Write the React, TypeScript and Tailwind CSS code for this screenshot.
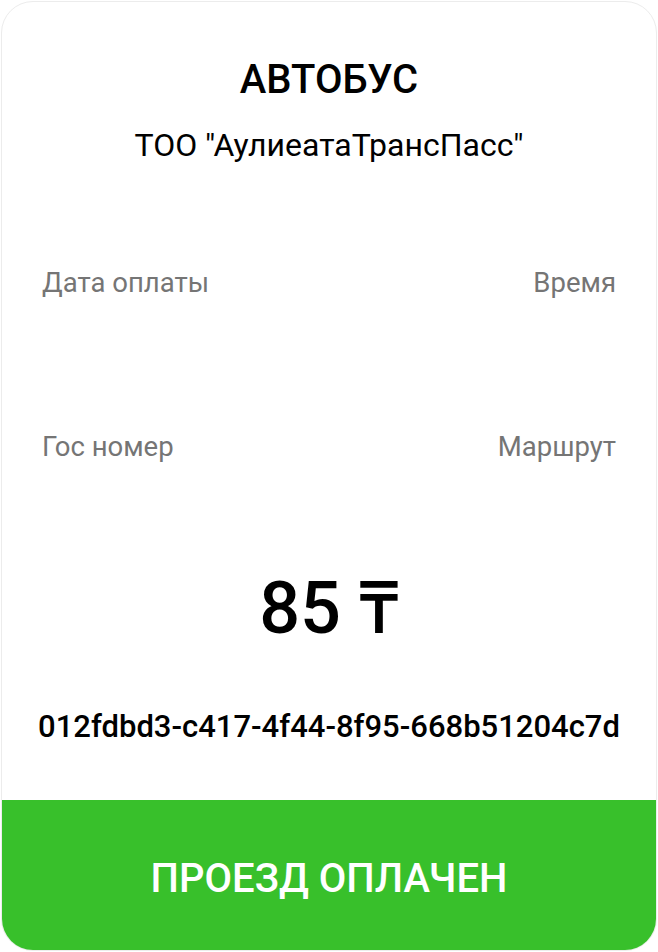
export default function App() {
  return (
    <div className="w-[658px] h-[952px] bg-white p-px" style={{ fontFamily: 'Roboto, "Noto Sans", sans-serif' }}>
      <div className="h-full flex flex-col rounded-[32px] border border-[#ececec] overflow-hidden bg-white">
        <div className="flex-1 flex flex-col px-10">
          <h1 className="mt-[52px] text-center text-[40px] leading-[52px] font-medium text-black">АВТОБУС</h1>
          <p className="mt-[19px] text-center text-[32px] leading-[40px] text-black">ТОО "АулиеатаТрансПасс"</p>

          <div className="mt-[100px] flex justify-between text-[27.5px] leading-[36px] text-[#757575]">
            <span>Дата оплаты</span>
            <span>Время</span>
          </div>
          <div className="mt-[128px] flex justify-between text-[27.5px] leading-[36px] text-[#757575]">
            <span>Гос номер</span>
            <span>Маршрут</span>
          </div>

          <div className="mt-[104px] text-center text-[72px] leading-[80px] font-medium text-black">85 ₸</div>
          <div className="mt-[58px] -mx-8 text-center text-[31px] leading-[40px] font-medium text-black">
            012fdbd3-c417-4f44-8f95-668b51204c7d
          </div>
        </div>
        <div className="h-[150px] bg-[#38c02b] flex items-center justify-center">
          <span className="mt-2 text-[40px] leading-[48px] font-medium text-white">ПРОЕЗД ОПЛАЧЕН</span>
        </div>
      </div>
    </div>
  )
}
